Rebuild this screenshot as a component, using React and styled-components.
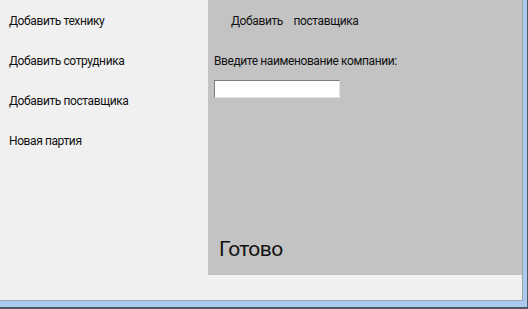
import React from 'react';
import styled, { createGlobalStyle } from 'styled-components';

const GlobalStyle = createGlobalStyle`
  html, body {
    margin: 0;
    padding: 0;
    background: #ffffff;
  }
`;

const WindowFrame = styled.div`
  width: 528px;
  height: 309px;
  box-sizing: border-box;
  border-right: 1px solid #4f5a66;
  border-bottom: 2px solid #4f5a66;
  background: #aacbef;
  display: flex;
  flex-direction: column;
  font-family: Roboto, 'Liberation Sans', Arial, sans-serif;
  color: #111;
`;

const ClientArea = styled.div`
  width: 523px;
  height: 301px;
  box-sizing: border-box;
  border-right: 1px solid #9ba3ab;
  border-bottom: 1px solid #9ba3ab;
  margin-bottom: 5px;
  background: #f0f0f0;
  display: flex;
  align-items: flex-start;
`;

const Sidebar = styled.nav`
  width: 208px;
  flex: 0 0 208px;
  display: flex;
  flex-direction: column;
  padding-top: 13px;
  box-sizing: border-box;
`;

const MenuItem = styled.div`
  font-size: 12px;
  letter-spacing: -0.4px;
  line-height: 16px;
  height: 40px;
  padding-left: 9px;
  cursor: pointer;
`;

const Panel = styled.section`
  flex: 1;
  height: 275px;
  background: #c3c3c3;
  box-sizing: border-box;
  padding: 13px 0 0 6px;
  display: flex;
  flex-direction: column;
`;

const PanelTitle = styled.div`
  font-size: 12px;
  letter-spacing: -0.4px;
  line-height: 16px;
  padding-left: 17px;
  word-spacing: 8px;
`;

const FieldLabel = styled.label`
  margin-top: 24px;
  font-size: 12px;
  letter-spacing: -0.4px;
  line-height: 16px;
`;

const TextInput = styled.input`
  margin-top: 11px;
  width: 126px;
  height: 18px;
  box-sizing: border-box;
  border: 1px solid;
  border-color: #7a7a7a #e3e3e3 #e3e3e3 #7a7a7a;
  background: #ffffff;
  padding: 0 2px;
  font-family: inherit;
  font-size: 12px;
  outline: none;
`;

const Status = styled.div`
  margin-top: auto;
  margin-bottom: 14px;
  padding-left: 5px;
  font-size: 21px;
  letter-spacing: -0.6px;
  line-height: 24px;
`;

export default function App() {
  return (
    <>
      <GlobalStyle />
      <WindowFrame>
        <ClientArea>
          <Sidebar>
            <MenuItem>Добавить технику</MenuItem>
            <MenuItem>Добавить сотрудника</MenuItem>
            <MenuItem>Добавить поставщика</MenuItem>
            <MenuItem>Новая партия</MenuItem>
          </Sidebar>
          <Panel>
            <PanelTitle>Добавить поставщика</PanelTitle>
            <FieldLabel>Введите наименование компании:</FieldLabel>
            <TextInput type="text" />
            <Status>Готово</Status>
          </Panel>
        </ClientArea>
      </WindowFrame>
    </>
  );
}
